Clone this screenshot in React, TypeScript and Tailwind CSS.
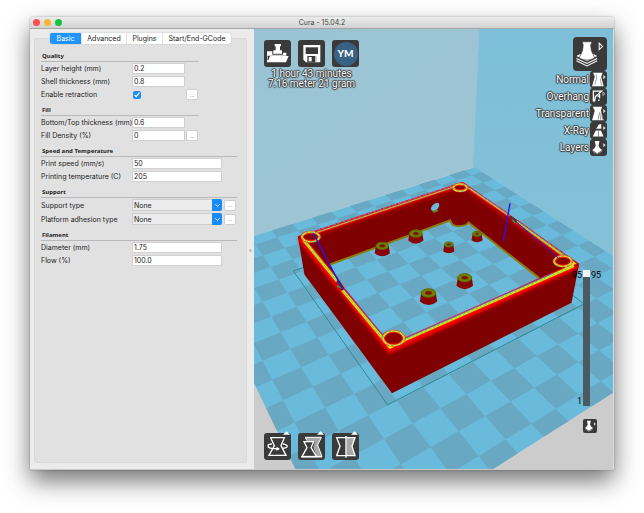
import React, { useState } from 'react';
import { ChevronDown } from 'lucide-react';

// --- Build plate -----------------------------------------------------------
// The plate is a perspective plane: a back corner plus two vanishing points.
const ORIGIN = [658, 443];
const VANISH_A = [-750, -466];
const VANISH_B = [3576, -466];
const MIN = -7.7;
const MAX = 7.55;

const project = (i: number, j: number) => {
  const s = -(0.1741 + i * 0.0225);
  const t = -(0.1125 + j * 0.0148);
  const w = 1 + s + t;
  const x = (ORIGIN[0] + s * VANISH_A[0] + t * VANISH_B[0]) / w;
  const y = (ORIGIN[1] + s * VANISH_A[1] + t * VANISH_B[1]) / w;
  return `${x.toFixed(1)},${y.toFixed(1)}`;
};

const clamp = (n: number) => Math.max(MIN, Math.min(MAX, n));

const quad = (i0: number, j0: number, i1: number, j1: number) =>
  [project(i0, j0), project(i1, j0), project(i1, j1), project(i0, j1)].join(' ');

const darkTiles: string[] = [];
for (let i = -8; i < 8; i++) {
  for (let j = -8; j < 8; j++) {
    if ((i + j + 16) % 2 === 1) {
      darkTiles.push(quad(clamp(i), clamp(j), clamp(i + 1), clamp(j + 1)));
    }
  }
}

// Screw posts standing on the floor of the box
const posts = [
  { x: 386, y: 679, r: 19, h: 22 },
  { x: 487, y: 642, r: 19, h: 21 },
  { x: 586, y: 675, r: 13, h: 20 },
  { x: 671, y: 643, r: 13, h: 19 },
  { x: 634, y: 775, r: 21, h: 24 },
  { x: 525, y: 821, r: 22, h: 25 },
];

// Corner screw holes in the rim
const holes = [
  { x: 171, y: 652, rx: 26, ry: 14 },
  { x: 620, y: 504, rx: 20, ry: 10 },
  { x: 929, y: 725, rx: 26, ry: 15 },
  { x: 420, y: 957, rx: 31, ry: 21 },
];

const rims = [
  { d: 'M148 652L622 495', w: 4, core: '#c9c46a' },
  { d: 'M634 497L768 589', w: 5, core: '#d4c860' },
  { d: 'M790 606L962 731', w: 7, core: '#b8dc40' },
  { d: 'M149 661L250 785', w: 9, core: '#c8e820' },
  { d: 'M266 812L408 982', w: 9, core: '#c8e820' },
  { d: 'M410 981L962 739', w: 9, core: '#d4f010' },
];

const Scene = () => (
  <svg
    className="absolute inset-0 h-full w-full"
    viewBox="0 27 1080 1323"
    preserveAspectRatio="xMidYMid slice"
    aria-hidden="true"
  >
    <defs>
      <linearGradient id="wallLeft" x1="0" y1="0" x2="1" y2="1">
        <stop offset="0" stopColor="#98c3d5" />
        <stop offset="1" stopColor="#9fc5d3" />
      </linearGradient>
      <linearGradient id="wallRight" x1="0" y1="0" x2="0" y2="1">
        <stop offset="0" stopColor="#7dbfd8" />
        <stop offset="1" stopColor="#87c2d7" />
      </linearGradient>
      <filter id="glow" x="-10%" y="-10%" width="120%" height="120%">
        <feGaussianBlur stdDeviation="4" />
      </filter>
    </defs>

    <rect x="0" y="0" width="1080" height="1400" fill="#cccccc" />
    <path d="M0 0H679L658 443L-400 775V0z" fill="url(#wallLeft)" />
    <path d="M679 0H1500V987L658 443z" fill="url(#wallRight)" />

    <polygon points={quad(MIN, MIN, MAX, MAX)} fill="#69badb" />
    {darkTiles.map((points) => (
      <polygon key={points} points={points} fill="#69a8c3" />
    ))}

    {/* skirt */}
    <path d="M152 743L119 755L402 1157L992 854L958 827" fill="none" stroke="#2c8c90" strokeWidth="3" />

    {/* shell, open where the floor shows through */}
    <path
      fillRule="evenodd"
      fill="#7f0000"
      d="M132 650L628 487L978 733L955 850L415 1122L152 765z
         M226 736L590 602Q594 620 616 620T645 609L858 776L458 964Q452 935 420 935T386 950L272 806z
         M533 571C530 560 546 548 555 550C562 556 552 572 541 576z"
    />
    <path d="M226 736L590 602Q594 620 616 620T645 609L858 776" fill="none" stroke="#8c7a08" strokeWidth="6" />
    <path d="M537 575Q546 579 554 571" fill="none" stroke="#6f7a10" strokeWidth="5" />

    {posts.map(({ x, y, r, h }) => (
      <g key={x}>
        <path
          d={`M${x - r} ${y}L${x - r - 4} ${y + h}Q${x} ${y + h + r}  ${x + r + 4} ${y + h}L${x + r} ${y}z`}
          fill="#8a0505"
        />
        <ellipse cx={x} cy={y} rx={r} ry={r * 0.58} fill="#7d7c00" stroke="#4f6a00" strokeWidth="3" />
        <ellipse cx={x} cy={y} rx={r * 0.5} ry={r * 0.3} fill="#7f1000" stroke="#4b8a10" strokeWidth="2" />
      </g>
    ))}

    {/* top layer of the print */}
    <path d="M137 656L408 995L974 739" fill="none" stroke="#ff0000" strokeWidth="14" filter="url(#glow)" />
    <path d="M152 656L628 500L955 735" fill="none" stroke="#c00000" strokeWidth="9" filter="url(#glow)" />
    <path d="M134 651L628 488L976 734" fill="none" stroke="#f01818" strokeWidth="3" />
    {rims.map(({ d, w, core }) => (
      <g key={d} fill="none">
        <path d={d} stroke="#ff1500" strokeWidth={w + 5} />
        <path d={d} stroke={core} strokeWidth={w - 1} />
        <path d={d} stroke="#35c87a" strokeWidth="2" strokeDasharray="9 5" />
      </g>
    ))}
    <g fill="none" stroke="#7a46d8" strokeWidth="3">
      <path d="M160 642L618 491" stroke="#8a70c0" strokeDasharray="10 6" />
      <path d="M640 496L770 587M795 606L960 722" stroke="#8068c8" strokeDasharray="12 6" />
      <path d="M274 808L386 945" />
      <path d="M458 956L900 761" />
    </g>
    <path d="M390 965L408 989L455 968L440 945z" fill="#ffff00" />
    <path d="M945 714L970 733L935 748z" fill="#f0dc20" />
    <path d="M140 650L165 643L160 660z" fill="#f0dc20" />
    <path d="M610 497L628 490L640 499z" fill="#f0dc20" />
    {holes.map(({ x, y, rx, ry }) => (
      <g key={x}>
        <ellipse cx={x} cy={y} rx={rx + 4} ry={ry + 3} fill="none" stroke="#f02020" strokeWidth="3" />
        <ellipse cx={x} cy={y} rx={rx} ry={ry} fill="#8c0000" stroke="#dfe81c" strokeWidth="6" />
        <ellipse cx={x} cy={y} rx={rx + 1} ry={ry + 1} fill="none" stroke="#4b8fd8" strokeWidth="2" strokeDasharray="8 6" />
        <ellipse cx={x} cy={y} rx={rx - 4} ry={ry - 3} fill="none" stroke="#ff1a00" strokeWidth="3" />
      </g>
    ))}

    {/* seams in the side walls */}
    <path d="M250 789L264 809M770 591L788 605" fill="none" stroke="#8a2a00" strokeWidth="9" />
    <path d="M250 800L262 806M776 600L786 610" fill="none" stroke="#5a8a10" strokeWidth="5" />

    {/* travel moves */}
    <g fill="none" stroke="#2414f4" strokeWidth="4">
      <path d="M178 640L268 812" />
      <path d="M770 551L750 664" />
      <path d="M772 592L915 716" strokeWidth="3" />
    </g>
  </svg>
);

// --- Icons -----------------------------------------------------------------
const TOWER = 'M27 14H56L52 24L54 40L64 62Q41 74 18 62L28 40L30 24z';

const Icon = ({ children, view = 81 }: { children: React.ReactNode; view?: number }) => (
  <svg viewBox={`0 0 ${view} ${view}`} className="h-full w-full" aria-hidden="true">
    {children}
  </svg>
);

const LoadIcon = () => (
  <Icon>
    <path d="M32 12H51V19H48V31H54V41H28V31H35V19H32z" fill="#fff" />
    <path d="M9 34H25V44H57V38H67V47H9z" fill="#fff" />
    <path d="M9 34V67H66L74 48H17L12 62" fill="#fff" />
    <path d="M16 48L11 60" stroke="#3a3a3a" strokeWidth="3" />
  </Icon>
);

const SaveIcon = () => (
  <Icon>
    <path d="M16 15H67V67H24L16 59z" fill="#fff" />
    <path d="M23 22H60V42H23z" fill="#3a3a3a" />
    <path d="M28 48H56V67H28z" fill="#3a3a3a" />
    <path d="M32 51H41V64H32z" fill="#fff" />
    <path d="M52 48H56V67H52z" fill="#fff" />
  </Icon>
);

const ModeIcon = () => (
  <Icon view={100}>
    <path d="M10 63L41 78L71 63M10 70L41 85L71 70" fill="none" stroke="#fff" strokeWidth="3" />
    <path d="M10 56L20 51H62L71 56L41 71z" fill="#fff" />
    <path d={TOWER} fill="#fff" stroke="#3a3a3a" strokeWidth="2" />
    <path d="M77 18L87 28L77 37z" fill="none" stroke="#fff" strokeWidth="3" />
  </Icon>
);

const smallArrow = <path d="M39 12L46 18L39 24z" fill="#ddd" />;

const NormalIcon = () => (
  <Icon view={50}>
    <path d="M9 5H37L33 17L40 45H6L14 17z" fill="#fff" />
    <path d="M17 10L20 20L14 40M30 22L34 42" fill="none" stroke="#777" strokeWidth="2" />
    {smallArrow}
  </Icon>
);

const OverhangIcon = () => (
  <Icon view={50}>
    <path d="M10 40V9H34L16 25L13 40" fill="none" stroke="#fff" strokeWidth="4" />
    <path d="M22 24H26M28 18V30M24 36H28" stroke="#fff" strokeWidth="4" />
    <path d="M38 12L44 17L38 22z" fill="none" stroke="#ddd" strokeWidth="2" />
  </Icon>
);

const TransparentIcon = () => (
  <Icon view={50}>
    <path d="M8 5H36L32 16L40 45H6L14 17z" fill="#fff" />
    <path d="M28 22L24 43M33 22L31 43M37 30L37 43" stroke="#555" strokeWidth="2" />
    {smallArrow}
  </Icon>
);

const XRayIcon = () => (
  <Icon view={50}>
    <path d="M26 7L33 6V20H18z" fill="#fff" />
    <path d="M17 25H32L40 43H8z" fill="#fff" />
    <path d="M25 23V43" stroke="#666" strokeWidth="2" />
    {smallArrow}
  </Icon>
);

const LayersIcon = () => (
  <Icon view={50}>
    <path d="M14 6H28L25 20L29 27L36 32L21 42L7 32L13 27L17 20z" fill="#fff" />
    <path d="M8 36L21 44L35 36" fill="none" stroke="#bbb" strokeWidth="2" />
    {smallArrow}
  </Icon>
);

const RotateIcon = () => (
  <Icon>
    <path d="M20 14H61L51 38L66 67H15L31 38z" fill="none" stroke="#fff" strokeWidth="4" />
    <path d="M24 33C8 33 8 44 24 46L44 48M57 33C76 35 73 46 54 46" fill="none" stroke="#fff" strokeWidth="4" />
    <path d="M38 41L48 48L37 53z" fill="#fff" />
  </Icon>
);

const ScaleIcon = () => (
  <Icon>
    <path d="M22 13H70L59 36L72 71H57L46 44L51 24H26z" fill="#a8a8a8" />
    <path d="M26 22L22 13H70L59 36L72 71" fill="none" stroke="#fff" strokeWidth="3" />
    <path d="M18 26H47L39 44L56 71H12L27 44z" fill="#3a3a3a" stroke="#fff" strokeWidth="4" />
    <path d="M10 71H72" stroke="#fff" strokeWidth="5" />
  </Icon>
);

const MirrorIcon = () => (
  <Icon>
    <path d="M43 15H69L60 40L69 68H43z" fill="#a8a8a8" />
    <path d="M14 14H69L60 40L69 68H14L24 40z" fill="none" stroke="#fff" strokeWidth="4" />
    <path d="M42 9V74" stroke="#fff" strokeWidth="4" />
  </Icon>
);

// --- Settings panel --------------------------------------------------------
const Section = ({ title, wide, children }: { title: string; wide?: boolean; children: React.ReactNode }) => (
  <section>
    <h2
      className={`mb-px h-[11px] border-b border-[#b9b9b9] pl-px font-['Noto_Sans',sans-serif] text-[6px] leading-[10px] font-bold ${
        wide ? 'w-[196px]' : 'w-[158px]'
      }`}
    >
      {title}
    </h2>
    <div className="flex flex-col gap-[2px]">{children}</div>
  </section>
);

const MoreButton = ({ label }: { label: string }) => (
  <button
    aria-label={label}
    className="h-[11px] w-[12px] rounded-[2px] border border-[#cfcfcf] bg-white text-center text-[6px] leading-[6px] text-gray-500"
  >
    ...
  </button>
);

const Row = ({ id, label, children }: { id: string; label: string; children: React.ReactNode }) => (
  <div className="flex items-center">
    <label htmlFor={id} className="w-[91px] shrink-0 whitespace-nowrap">
      {label}
    </label>
    {children}
  </div>
);

const Field = ({ id, label, value, wide, more }: { id: string; label: string; value: string; wide?: boolean; more?: boolean }) => (
  <Row id={id} label={label}>
    <input
      id={id}
      defaultValue={value}
      className={`h-[11px] border border-[#d0d0d0] bg-white px-px outline-none ${wide ? 'w-[90px]' : 'w-[53px]'}`}
    />
    {more && (
      <span className="ml-px flex">
        <MoreButton label={`${label} options`} />
      </span>
    )}
  </Row>
);

const Choice = ({ id, label }: { id: string; label: string }) => (
  <Row id={id} label={label}>
    <div className="relative h-[12px] w-[90px]">
      <select id={id} className="h-full w-full appearance-none border border-[#cdcdcd] bg-[#ececec] px-px outline-none">
        <option>None</option>
      </select>
      <span className="pointer-events-none absolute inset-y-0 right-0 flex w-[10px] items-center justify-center rounded-r-[2px] bg-[#1a8cf8] text-white">
        <ChevronDown size={7} strokeWidth={3} />
      </span>
    </div>
    <span className="ml-[2px] flex">
      <MoreButton label={`${label} options`} />
    </span>
  </Row>
);

const tabs = ['Basic', 'Advanced', 'Plugins', 'Start/End-GCode'];
const tabWidths = ['w-[31px]', 'w-[45px]', 'w-[36px]', 'w-[69px]'];

const SettingsPanel = () => {
  const [active, setActive] = useState('Basic');

  return (
    <aside className="relative flex w-[224px] shrink-0 flex-col bg-[#ebebeb] pt-[4px] pr-[7px] pb-[6px] pl-[4px]">
      <div role="tablist" className="relative z-10 mx-auto flex h-[11px] rounded-[2px] bg-white shadow-[0_0_1px_#888]">
        {tabs.map((tab, index) => (
          <button
            key={tab}
            role="tab"
            aria-selected={tab === active}
            onClick={() => setActive(tab)}
            className={`${tabWidths[index]} whitespace-nowrap leading-[11px] ${
              tab === active ? 'rounded-l-[2px] bg-[#2094fb] text-white' : 'border-l border-[#e0e0e0]'
            }`}
          >
            {tab}
          </button>
        ))}
      </div>
      <form className="-mt-[6px] flex grow flex-col gap-[5px] rounded-[2px] border border-[#d9d9d9] bg-[#e1e1e1] pt-[12px] pl-[6px]">
        <Section title="Quality">
          <Field id="layer" label="Layer height (mm)" value="0.2" />
          <Field id="shell" label="Shell thickness (mm)" value="0.8" />
          <Row id="retraction" label="Enable retraction">
            <span className="flex w-[54px] pl-px">
              <input
                id="retraction"
                type="checkbox"
                defaultChecked
                className="size-[8px] accent-[#1a8cf8]"
              />
            </span>
            <MoreButton label="Retraction options" />
          </Row>
        </Section>
        <Section title="Fill">
          <Field id="bottom" label="Bottom/Top thickness (mm)" value="0.6" />
          <Field id="density" label="Fill Density (%)" value="0" more />
        </Section>
        <Section title="Speed and Temperature" wide>
          <Field id="speed" label="Print speed (mm/s)" value="50" wide />
          <Field id="temperature" label="Printing temperature (C)" value="205" wide />
        </Section>
        <Section title="Support" wide>
          <Choice id="support" label="Support type" />
          <Choice id="adhesion" label="Platform adhesion type" />
        </Section>
        <Section title="Filament" wide>
          <Field id="diameter" label="Diameter (mm)" value="1.75" wide />
          <Field id="flow" label="Flow (%)" value="100.0" wide />
        </Section>
      </form>
      <span className="absolute top-1/2 right-[2px] size-[3px] rounded-full bg-[#c4c4c4]" />
    </aside>
  );
};

// --- 3D view ---------------------------------------------------------------
const ToolButton = ({ label, marker, children }: { label: string; marker?: boolean; children: React.ReactNode }) => (
  <button aria-label={label} className="relative size-[27px] rounded-[3px] bg-[#3a3a3a]">
    {children}
    {marker && (
      <svg viewBox="0 0 8 5" className="absolute -top-[2px] right-px h-[5px] w-[7px]" aria-hidden="true">
        <path d="M4 0L8 4H0z" fill="#fff" />
      </svg>
    )}
  </button>
);

const viewModes = [
  { name: 'Normal', icon: <NormalIcon /> },
  { name: 'Overhang', icon: <OverhangIcon /> },
  { name: 'Transparent', icon: <TransparentIcon /> },
  { name: 'X-Ray', icon: <XRayIcon /> },
  { name: 'Layers', icon: <LayersIcon /> },
];

const outlined =
  "font-[Roboto,sans-serif] text-[10px] text-white [text-shadow:0_0_1px_#222,1px_0_1px_#333,-1px_0_1px_#444,0_1px_1px_#333,0_-1px_1px_#444]";

const Viewport = () => (
  <main className="relative grow overflow-hidden border-r border-[#dcdcdc]">
    <Scene />
    <div className="relative flex h-full justify-between">
      <div className="flex flex-col justify-between pt-[11px] pb-[9px] pl-[10px]">
        <div>
          <div className="flex gap-[7px]">
            <ToolButton label="Load"><LoadIcon /></ToolButton>
            <ToolButton label="Save"><SaveIcon /></ToolButton>
            <ToolButton label="Share on YouMagine">
              <span className="mx-auto flex size-[24px] items-center justify-center rounded-full bg-[#386283] font-[Lato,sans-serif] text-[10px] font-black text-white">
                YM
              </span>
            </ToolButton>
          </div>
          <p className={`mt-[2px] text-center leading-[10px] ${outlined}`}>
            1 hour 43 minutes
            <br />
            7.16 meter 21 gram
          </p>
        </div>
        <div className="flex gap-[7px]">
          <ToolButton label="Rotate" marker><RotateIcon /></ToolButton>
          <ToolButton label="Scale" marker><ScaleIcon /></ToolButton>
          <ToolButton label="Mirror" marker><MirrorIcon /></ToolButton>
        </div>
      </div>

      <div className="flex flex-col items-end justify-between pt-[8px] pr-[6px] pb-[36px]">
        <div className="flex flex-col items-end">
          <button aria-label="View mode" className="size-[34px] rounded-[4px] bg-[#3a3a3a]">
            <ModeIcon />
          </button>
          {viewModes.map(({ name, icon }) => (
            <button key={name} className={`flex items-center gap-px leading-[17px] ${outlined}`}>
              {name}
              <span className="size-[17px] rounded-[3px] bg-[#3a3a3a]">{icon}</span>
            </button>
          ))}
        </div>

        <div className="mr-[6px] grid grid-cols-[9px_7px_10px] gap-x-px font-[Roboto,sans-serif] text-[9px] leading-[10px] text-black">
          <div className="flex flex-col items-end justify-between">
            <span>95</span>
            <span>1</span>
          </div>
          <input
            type="range"
            min={1}
            max={95}
            defaultValue={95}
            aria-label="Layer"
            className="h-[136px] w-[7px] appearance-none bg-[#4b5a60] [direction:rtl] [writing-mode:vertical-lr] [&::-webkit-slider-thumb]:size-[7px] [&::-webkit-slider-thumb]:appearance-none [&::-webkit-slider-thumb]:bg-[#f2f2f2]"
          />
          <span>95</span>
          <button aria-label="Layer view" className="col-span-2 col-start-2 mt-[13px] size-[14px] rounded-[2px] bg-[#3a3a3a]">
            <LayersIcon />
          </button>
        </div>
      </div>
    </div>
  </main>
);

export default function App() {
  return (
    <div className="flex min-h-screen flex-col bg-white px-[30px] pt-[17px] pb-[43px] font-[Inter,'Liberation_Sans',sans-serif] text-[7px] leading-[11px] text-[#222]">
      <div className="flex grow flex-col rounded-t-[3px] border-b border-[#c9c9c9] shadow-[0_11px_24px_rgba(0,0,0,0.55),0_0_2px_rgba(0,0,0,0.35)]">
        <header className="relative flex h-[12px] items-center justify-center rounded-t-[3px] border-b border-[#a5a5a5] bg-linear-to-b from-[#ececec] to-[#d2d2d2] text-[#444]">
          <div className="absolute inset-y-0 left-[3px] flex items-center gap-[4px]">
            <button aria-label="Close" className="size-[7px] rounded-full bg-[#fb4f4c]" />
            <button aria-label="Minimize" className="size-[7px] rounded-full bg-[#fdb436]" />
            <button aria-label="Zoom" className="size-[7px] rounded-full bg-[#14c33f]" />
          </div>
          <h1>Cura - 15.04.2</h1>
        </header>
        <div className="flex grow">
          <SettingsPanel />
          <Viewport />
        </div>
      </div>
    </div>
  );
}
